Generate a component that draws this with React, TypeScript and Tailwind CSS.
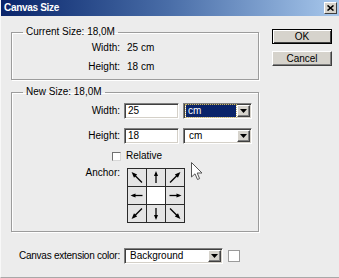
import React from "react";

const sunken =
  "border border-t-[#808080] border-l-[#808080] border-b-white border-r-white shadow-[inset_1px_1px_0_#404040,inset_-1px_-1px_0_#d4d0c8]";

function DropArrow() {
  return (
    <div className="w-[13px] h-full bg-[#d6d3cc] border border-t-white border-l-white border-b-[#404040] border-r-[#404040] shadow-[inset_-1px_-1px_0_#808080] flex items-center justify-center">
      <svg width="7" height="4" viewBox="0 0 7 4">
        <polygon points="0,0 7,0 3.5,4" fill="#000" />
      </svg>
    </div>
  );
}

function Select({ value, active, w }: { value: string; active?: boolean; w: string }) {
  return (
    <div className={`${w} h-[16px] bg-white ${sunken} flex items-stretch p-px`}>
      <div className="flex-1 flex items-center pl-px pr-px">
        {active ? (
          <div className="w-full h-[12px] bg-[#0a246a] outline-1 outline-dotted outline-[#c8b870] text-white flex items-center pl-[2px]">
            {value}
          </div>
        ) : (
          <div className="pl-[3px]">{value}</div>
        )}
      </div>
      <DropArrow />
    </div>
  );
}

function Arrow({ rot }: { rot: number }) {
  const diag = rot % 90 !== 0;
  return (
    <svg width="18" height="17" viewBox="0 0 18 17">
      <g transform={`rotate(${rot} 9 8.5)`}>
        {diag ? (
          <>
            <line x1="9" y1="3.5" x2="9" y2="15.5" stroke="#000" strokeWidth="1.3" />
            <polygon points="6.8,6.5 9,0.8 11.2,6.5" fill="#000" />
          </>
        ) : (
          <>
            <line x1="9" y1="4" x2="9" y2="14" stroke="#000" strokeWidth="1.3" />
            <polygon points="7,7 9,2 11,7" fill="#000" />
          </>
        )}
      </g>
    </svg>
  );
}

function AnchorGrid() {
  const rots: (number | null)[] = [-45, 0, 45, -90, null, 90, -135, 180, 135];
  return (
    <div className="grid grid-cols-[18px_18px_18px] grid-rows-[17px_17px_17px] gap-px p-px bg-[#2a2a2a]">
      {rots.map((r, i) => (
        <div key={i} className={`${r === null ? "bg-white" : "bg-[#e4e4e4]"} flex items-center justify-center`}>
          {r !== null && <Arrow rot={r} />}
        </div>
      ))}
    </div>
  );
}

export default function App() {
  return (
    <div className="w-[339px] h-[278px] bg-[#ececec] font-['Liberation_Sans',Arial,sans-serif] text-[10px] leading-[12px] text-black relative overflow-hidden border-b border-b-[#a8a8a8] border-l border-l-[#f8f8f8]">
      {/* Title bar */}
      <div className="h-[16px] bg-gradient-to-r from-[#0a246a] via-[#4a6ea8] to-[#a8c8ec] flex items-center justify-between pl-[3px] pr-[2px]">
        <span className="text-white font-bold tracking-[-0.3px] text-[10px]">Canvas Size</span>
        <div className="w-[13px] h-[12px] bg-[#d6d3cc] border border-t-white border-l-white border-b-[#404040] border-r-[#404040] flex items-center justify-center">
          <svg width="7" height="6" viewBox="0 0 7 6">
            <path d="M0.5 0.5 L6.5 5.5 M6.5 0.5 L0.5 5.5" stroke="#000" strokeWidth="1.6" />
          </svg>
        </div>
      </div>

      {/* Main */}
      <div className="flex pl-[10px] pt-[10px]">
        <div className="w-[248px] flex flex-col">
          <fieldset className="border border-[#9c9c9c] shadow-[1px_1px_0_#fff,inset_1px_1px_0_#fff] h-[54px]">
            <legend className="ml-[11px] px-[3px] leading-[12px]">Current Size: 18,0M</legend>
            <div className="flex flex-col">
              <div className="h-[19px] flex items-center">
                <div className="w-[108px] text-right">Width:</div>
                <div className="ml-[7px]">25 cm</div>
              </div>
              <div className="h-[19px] flex items-center">
                <div className="w-[108px] text-right">Height:</div>
                <div className="ml-[7px]">18 cm</div>
              </div>
            </div>
          </fieldset>

          <fieldset className="mt-[6px] border border-[#9c9c9c] shadow-[1px_1px_0_#fff,inset_1px_1px_0_#fff] h-[146px]">
            <legend className="ml-[11px] px-[3px] leading-[12px]">New Size: 18,0M</legend>
            <div className="flex flex-col">
              <div className="mt-[5px] h-[16px] flex items-center">
                <div className="w-[108px] text-right">Width:</div>
                <div className={`ml-[4px] w-[55px] h-[16px] bg-white ${sunken} flex items-center pl-[3px]`}>25</div>
                <div className="ml-[4px]">
                  <Select value="cm" active w="w-[69px]" />
                </div>
              </div>
              <div className="mt-[9px] h-[16px] flex items-center">
                <div className="w-[108px] text-right">Height:</div>
                <div className={`ml-[4px] w-[55px] h-[16px] bg-white ${sunken} flex items-center pl-[3px]`}>18</div>
                <div className="ml-[4px]">
                  <Select value="cm" w="w-[69px]" />
                </div>
              </div>
              <div className="mt-[5px] h-[14px] flex items-center">
                <div className="ml-[100px] w-[9px] h-[9px] bg-white border border-t-[#707070] border-l-[#707070] border-b-[#d8d8d8] border-r-[#d8d8d8]" />
                <div className="ml-[5px]">Relative</div>
              </div>
              <div className="mt-[5px] flex items-start">
                <div className="w-[108px] text-right mt-[-1px]">Anchor:</div>
                <div className="ml-[7px]">
                  <AnchorGrid />
                </div>
              </div>
            </div>
          </fieldset>
        </div>

        <div className="ml-[13px] pt-[3px] flex flex-col gap-[7px]">
          <div className="w-[60px] h-[15px] border border-black bg-[#d6d3cc] shadow-[inset_1px_1px_0_#fff,inset_-1px_-1px_0_#404040] flex items-center justify-center">
            OK
          </div>
          <div className="w-[60px] h-[15px] bg-[#d6d3cc] border border-t-white border-l-white border-b-[#404040] border-r-[#404040] shadow-[inset_-1px_-1px_0_#808080] flex items-center justify-center">
            Cancel
          </div>
        </div>
      </div>

      {/* Bottom row */}
      <div className="mt-[16px] pl-[18px] flex items-center h-[15px]">
        <div className="w-[102px] whitespace-nowrap tracking-[-0.25px]">Canvas extension color:</div>
        <div className="ml-[3px]">
          <Select value="Background" w="w-[99px]" />
        </div>
        <div className="ml-[5px] w-[12px] h-[12px] bg-white border border-[#9a9a9a]" />
      </div>

      {/* Mouse cursor */}
      <svg className="absolute left-[190px] top-[162px]" width="12" height="19" viewBox="0 0 12 19">
        <path d="M0.5 0.5 L0.5 15 L4 11.8 L6.5 17.5 L8.6 16.6 L6.2 11 L11 11 Z" fill="#fff" stroke="#555" strokeWidth="1" />
      </svg>
    </div>
  );
}
